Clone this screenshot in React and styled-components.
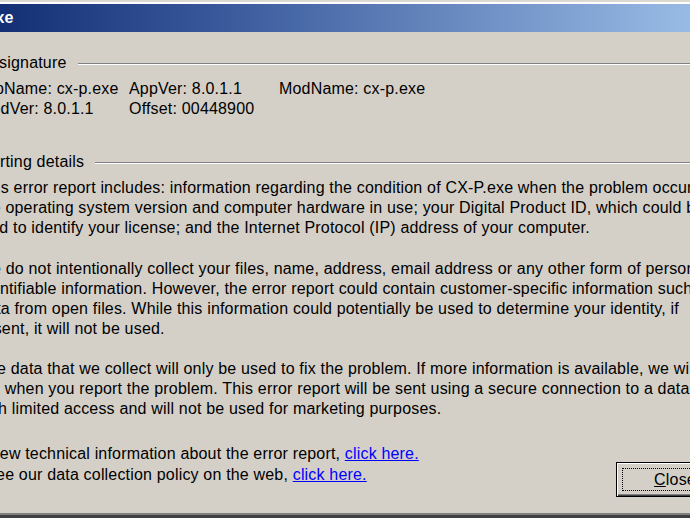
import React from "react";
import styled, { createGlobalStyle } from "styled-components";

const Global = createGlobalStyle`
  html, body {
    margin: 0;
    padding: 0;
    width: 690px;
    height: 518px;
    overflow: hidden;
    background: #d4d0c8;
  }
`;

const Frame = styled.div`
  margin-left: -60px;
  width: 820px;
  height: 518px;
  display: flex;
  flex-direction: column;
  background: #d4d0c8;
  font-family: "Liberation Sans", Arial, sans-serif;
  font-size: 16px;
  line-height: 20px;
  letter-spacing: 0.18px;
  color: #000;
  border-top: 2px solid #dcd9d2;
  box-sizing: border-box;
`;

const TopLight = styled.div`
  height: 2px;
  background: #ffffff;
`;

const TitleBar = styled.div`
  height: 28px;
  display: flex;
  align-items: center;
  padding-left: 6px;
  background: linear-gradient(90deg, #0a246a 0%, #3a5a9c 35%, #a6caf0 100%);
  color: #fff;
  font-weight: bold;
  font-size: 16px;
  letter-spacing: 0;
`;

const Body = styled.div`
  flex: 1;
  display: flex;
  flex-direction: column;
  padding: 21px 0 0 21px;
`;

const GroupLabel = styled.div`
  display: flex;
  align-items: center;
  gap: 11px;
  margin-top: ${(p) => p.$top || 0}px;
  margin-left: ${(p) => p.$shift || 0}px;
  white-space: nowrap;
`;

const Etch = styled.div`
  flex: 1;
  height: 1px;
  margin-top: 2px;
  background: #808080;
  border-bottom: 1px solid #ffffff;
`;

const Content = styled.div`
  padding-left: 17px;
  white-space: nowrap;
`;

const SigGrid = styled.div`
  display: grid;
  grid-template-columns: 151px 150px auto;
  margin-top: 6px;
`;

const Cell = styled.span`
  margin-left: ${(p) => p.$shift || 0}px;
`;

const Para = styled.div`
  margin-top: ${(p) => p.$top || 0}px;
`;

const Line = styled.div`
  margin-left: ${(p) => p.$shift || 0}px;
`;

const Bottom = styled.div`
  display: flex;
  align-items: flex-start;
  margin-top: 24px;
`;

const Links = styled.div`
  line-height: 21px;
  flex: 1;
`;

const Link = styled.a`
  color: #0000ff;
  text-decoration: underline;
  cursor: pointer;
`;

const Button = styled.button`
  margin-top: 19px;
  margin-right: 26px;
  width: 118px;
  height: 35px;
  padding: 0;
  background: #d4d0c8;
  border: 1px solid #000;
  box-shadow: inset 1px 1px 0 #fff, inset -1px -1px 0 #404040, inset -2px -2px 0 #808080;
  font-family: "Liberation Sans", Arial, sans-serif;
  font-size: 16px;
  letter-spacing: 0.18px;
  color: #000;
  display: flex;
  align-items: center;
  justify-content: center;
  position: relative;
  &::after {
    content: "";
    position: absolute;
    left: 5px;
    top: 5px;
    right: 5px;
    bottom: 5px;
    border: 1px dotted #000;
  }
  u {
    text-decoration: underline;
  }
`;

const BottomEdge = styled.div`
  height: 3px;
  background: #404040;
  border-top: 2px solid #808080;
`;

export default function App() {
  return (
    <>
      <Global />
      <Frame>
        <TopLight />
        <TitleBar>CX-P.exe</TitleBar>
        <Body>
          <GroupLabel $shift={-3}>
            Error signature
            <Etch />
          </GroupLabel>
          <Content>
            <SigGrid>
              <Cell $shift={-3}>AppName: cx-p.exe</Cell>
              <Cell>AppVer: 8.0.1.1</Cell>
              <Cell>ModName: cx-p.exe</Cell>
              <Cell>ModVer: 8.0.1.1</Cell>
              <Cell>Offset: 00448900</Cell>
            </SigGrid>
          </Content>
          <GroupLabel $top={33}>
            Reporting details
            <Etch />
          </GroupLabel>
          <Content>
            <Para $top={6}>
              <Line>This error report includes: information regarding the condition of CX-P.exe when the problem occurred;</Line>
              <Line>the operating system version and computer hardware in use; your Digital Product ID, which could be</Line>
              <Line $shift={-5}>used to identify your license; and the Internet Protocol (IP) address of your computer.</Line>
            </Para>
            <Para $top={21}>
              <Line $shift={-1}>We do not intentionally collect your files, name, address, email address or any other form of personally</Line>
              <Line>identifiable information. However, the error report could contain customer-specific information such as</Line>
              <Line>data from open files. While this information could potentially be used to determine your identity, if</Line>
              <Line $shift={-8}>present, it will not be used.</Line>
            </Para>
            <Para $top={20}>
              <Line>The data that we collect will only be used to fix the problem. If more information is available, we will</Line>
              <Line $shift={-30}>tell you when you report the problem. This error report will be sent using a secure connection to a database</Line>
              <Line>with limited access and will not be used for marketing purposes.</Line>
            </Para>
            <Bottom>
              <Links>
                <Line $shift={-12}>
                  To view technical information about the error report, <Link>click here.</Link>
                </Line>
                <Line $shift={-12}>
                  To see our data collection policy on the web, <Link>click here.</Link>
                </Line>
              </Links>
              <Button>
                <span>
                  <u>C</u>lose
                </span>
              </Button>
            </Bottom>
          </Content>
        </Body>
        <BottomEdge />
      </Frame>
    </>
  );
}
